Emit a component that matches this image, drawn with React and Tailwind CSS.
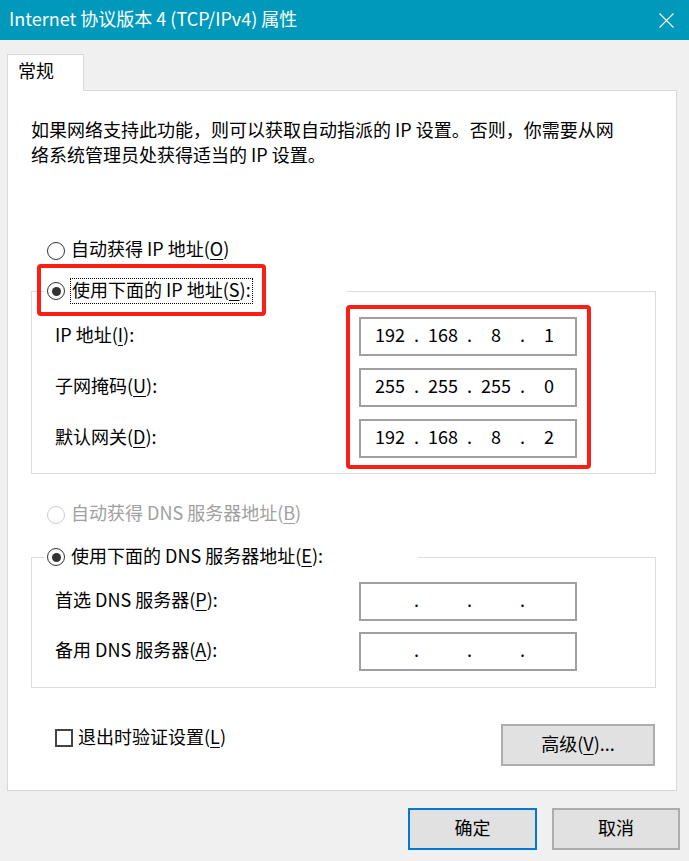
import React from 'react';

const Radio = ({ checked = false, disabled = false }) => (
  <span
    className={`flex items-center justify-center w-[18px] h-[18px] shrink-0 rounded-full border bg-white ${
      disabled ? 'border-[#cccccc]' : 'border-[#333333]'
    }`}
  >
    {checked && <span className="w-[9px] h-[9px] rounded-full bg-[#333333]" />}
  </span>
);

const IpBox = ({ parts = ['', '', '', ''] }) => (
  <div className="flex items-center w-[218px] h-[39px] pl-[9px] pb-[4px] border-2 border-[#a0a0a0] bg-white">
    {parts.map((p, i) => (
      <React.Fragment key={i}>
        <span className="w-[40px] text-center">{p}</span>
        {i < 3 && <span className="w-[13px] text-center">.</span>}
      </React.Fragment>
    ))}
  </div>
);

const Key = ({ children }) => <u className="underline-offset-[3px]">{children}</u>;

const Field = ({ children }) => <div className="flex items-center h-[39px] pb-[4px]">{children}</div>;

export default function App() {
  return (
    <div className="w-[689px] h-[861px] bg-[#f0f0f0] flex flex-col overflow-hidden text-[18px] leading-[25px] text-black font-['Noto_Sans_CJK_SC',sans-serif]">
      {/* title bar */}
      <div className="h-[40px] shrink-0 bg-[#0099bc] text-white flex items-center justify-between pl-[9px] pr-[15px]">
        <span className="mb-[3px]">Internet 协议版本 4 (TCP/IPv4) 属性</span>
        <svg width="15" height="15" viewBox="0 0 15 15" className="mt-[1px]">
          <path d="M0.5 0.5 L14.5 14.5 M14.5 0.5 L0.5 14.5" stroke="white" strokeWidth="1.1" fill="none" />
        </svg>
      </div>

      <div className="px-[7px] pt-[14px]">
        <div className="relative z-10 w-[77px] h-[37px] -mb-px bg-white border border-b-0 border-[#d9d9d9] pl-[10px] pt-[3px]">
          常规
        </div>

        <div className="w-[670px] h-[701px] bg-white border border-[#d9d9d9] pl-[23px] pr-[20px] pt-[26px] flex flex-col">
          <p>
            如果网络支持此功能，则可以获取自动指派的 IP 设置。否则，你需要从网
            <br />
            络系统管理员处获得适当的 IP 设置。
          </p>

          <label className="mt-[71px] ml-[16px] h-[25px] flex items-center gap-[6px]">
            <Radio />
            <span className="pb-[4px]">
              自动获得 IP 地址(<Key>O</Key>)
            </span>
          </label>

          <fieldset className="mt-[15px] border border-[#dcdcdc] pl-[12px] pt-[13px] pb-[15px]">
            <legend className="w-[303px] h-[26px] pl-[3px] flex items-center">
              <span className="relative flex items-center gap-[5px]">
                <Radio checked />
                <span className="h-[26px] px-[1px] pb-[3px] flex items-center border border-dotted border-black">
                  使用下面的 IP 地址(<Key>S</Key>):
                </span>
                <span className="absolute -left-[10px] -right-[13px] -top-[14px] -bottom-[12px] border-4 border-[#fa1e14] rounded-[4px]" />
              </span>
            </legend>
            <div className="flex pl-[11px]">
              <div className="w-[304px] flex flex-col gap-[12px]">
                <Field>
                  IP 地址(<Key>I</Key>):
                </Field>
                <Field>
                  子网掩码(<Key>U</Key>):
                </Field>
                <Field>
                  默认网关(<Key>D</Key>):
                </Field>
              </div>
              <div className="relative flex flex-col gap-[12px]">
                <IpBox parts={['192', '168', '8', '1']} />
                <IpBox parts={['255', '255', '255', '0']} />
                <IpBox parts={['192', '168', '8', '2']} />
                <span className="absolute -left-[13px] -right-[14px] -top-[12px] -bottom-[11px] border-4 border-[#fa1e14] rounded-[4px]" />
              </div>
            </div>
          </fieldset>

          <label className="mt-[28px] ml-[16px] h-[25px] flex items-center gap-[6px] text-[#a0a0a0]">
            <Radio disabled />
            <span className="pb-[4px]">
              自动获得 DNS 服务器地址(<Key>B</Key>)
            </span>
          </label>

          <fieldset className="mt-[17px] border border-[#dcdcdc] pl-[12px] pt-[12px] pb-[16px]">
            <legend className="w-[374px] h-[26px] pl-[3px] flex items-center gap-[6px]">
              <Radio checked />
              <span className="pb-[4px]">
                使用下面的 DNS 服务器地址(<Key>E</Key>):
              </span>
            </legend>
            <div className="flex pl-[11px]">
              <div className="w-[304px] flex flex-col gap-[11px]">
                <Field>
                  首选 DNS 服务器(<Key>P</Key>):
                </Field>
                <Field>
                  备用 DNS 服务器(<Key>A</Key>):
                </Field>
              </div>
              <div className="flex flex-col gap-[11px]">
                <IpBox />
                <IpBox />
              </div>
            </div>
          </fieldset>

          <div className="mt-[36px] pl-[24px] flex items-start justify-between">
            <label className="mt-[1px] h-[25px] flex items-center gap-[5px]">
              <span className="w-[18px] h-[18px] border-2 border-[#444444] bg-white" />
              <span className="pb-[3px]">
                退出时验证设置(<Key>L</Key>)
              </span>
            </label>
            <button className="w-[154px] h-[42px] mr-[1px] pb-[3px] bg-[#e1e1e1] border-2 border-[#adadad]">
              高级(<Key>V</Key>)...
            </button>
          </div>
        </div>
      </div>

      <div className="mt-[17px] pr-[9px] flex justify-end gap-[15px]">
        <button className="w-[129px] h-[42px] pb-[3px] bg-[#e1e1e1] border-2 border-[#0078d7]">确定</button>
        <button className="w-[128px] h-[42px] pb-[3px] bg-[#e1e1e1] border-2 border-[#adadad]">取消</button>
      </div>
    </div>
  );
}
